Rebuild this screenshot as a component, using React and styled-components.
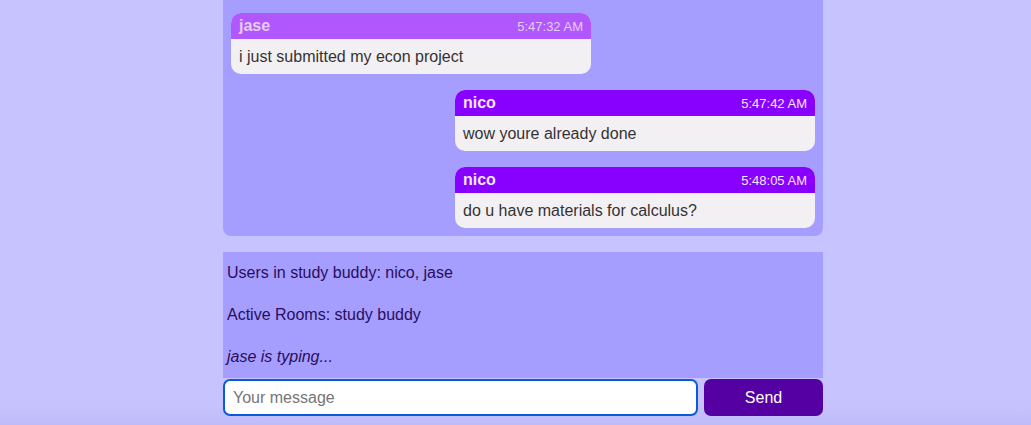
import React from "react";
import styled, { createGlobalStyle } from "styled-components";

const GlobalStyle = createGlobalStyle`
  html, body {
    margin: 0;
    padding: 0;
    height: 100%;
    overflow: hidden;
    background: #c7c3fe;
    font-family: "Liberation Sans", Arial, sans-serif;
  }
`;

const Page = styled.div`
  display: flex;
  flex-direction: column;
  align-items: center;
  height: 425px;
  padding-left: 15px;
  background: linear-gradient(to bottom, #c7c3fe 0, #c7c3fe 405px, #bfbbf8 425px);
`;

const Column = styled.div`
  width: 600px;
  display: flex;
  flex-direction: column;
`;

const ChatBox = styled.div`
  background: #a59efe;
  border-radius: 0 0 8px 8px;
  padding: 13px 8px 8px;
  display: flex;
  flex-direction: column;
  gap: 16px;
`;

const Bubble = styled.div`
  width: 360px;
  align-self: ${(p) => (p.$mine ? "flex-end" : "flex-start")};
  border-radius: 10px;
  overflow: hidden;
  background: #f3f0f3;
`;

const BubbleHead = styled.div`
  height: 26px;
  padding: 0 8px;
  display: flex;
  align-items: center;
  justify-content: space-between;
  background: ${(p) => (p.$mine ? "#8800fe" : "#b058fe")};
  color: ${(p) => (p.$mine ? "#f3e6ff" : "#e6cdf6")};
`;

const Name = styled.span`
  font-weight: bold;
  font-size: 16px;
`;

const Time = styled.span`
  font-size: 13px;
`;

const BubbleBody = styled.div`
  height: 35px;
  padding: 0 8px;
  display: flex;
  align-items: center;
  font-size: 16px;
  color: #333;
`;

const InfoPanel = styled.div`
  margin-top: 16px;
  background: #a59efe;
  padding: 12px 4px 12px;
  display: flex;
  flex-direction: column;
  gap: 24px;
`;

const InfoLine = styled.p`
  margin: 0;
  font-size: 16px;
  line-height: 18px;
  color: #2a0d5c;
  font-style: ${(p) => (p.$italic ? "italic" : "normal")};
`;

const Form = styled.form`
  margin-top: 1px;
  display: flex;
  gap: 6px;
  height: 37px;
`;

const Input = styled.input`
  flex: 1;
  box-sizing: border-box;
  height: 37px;
  border: 2px solid #0b5ad6;
  border-radius: 7px;
  padding: 0 8px;
  font-size: 16px;
  font-family: "Liberation Sans", Arial, sans-serif;
  background: #fff;
  outline: none;
  &::placeholder {
    color: #757575;
  }
`;

const SendButton = styled.button`
  width: 119px;
  height: 37px;
  border: none;
  border-radius: 7px;
  background: #5500a3;
  color: #fff;
  font-size: 16px;
  font-family: "Liberation Sans", Arial, sans-serif;
`;

const messages = [
  { name: "jase", time: "5:47:32 AM", text: "i just submitted my econ project", mine: false },
  { name: "nico", time: "5:47:42 AM", text: "wow youre already done", mine: true },
  { name: "nico", time: "5:48:05 AM", text: "do u have materials for calculus?", mine: true },
];

export default function App() {
  return (
    <>
      <GlobalStyle />
      <Page>
        <Column>
          <ChatBox>
            {messages.map((m, i) => (
              <Bubble key={i} $mine={m.mine}>
                <BubbleHead $mine={m.mine}>
                  <Name>{m.name}</Name>
                  <Time>{m.time}</Time>
                </BubbleHead>
                <BubbleBody>{m.text}</BubbleBody>
              </Bubble>
            ))}
          </ChatBox>
          <InfoPanel>
            <InfoLine>Users in study buddy: nico, jase</InfoLine>
            <InfoLine>Active Rooms: study buddy</InfoLine>
            <InfoLine $italic>jase is typing...</InfoLine>
          </InfoPanel>
          <Form onSubmit={(e) => e.preventDefault()}>
            <Input placeholder="Your message" autoFocus />
            <SendButton type="submit">Send</SendButton>
          </Form>
        </Column>
      </Page>
    </>
  );
}
